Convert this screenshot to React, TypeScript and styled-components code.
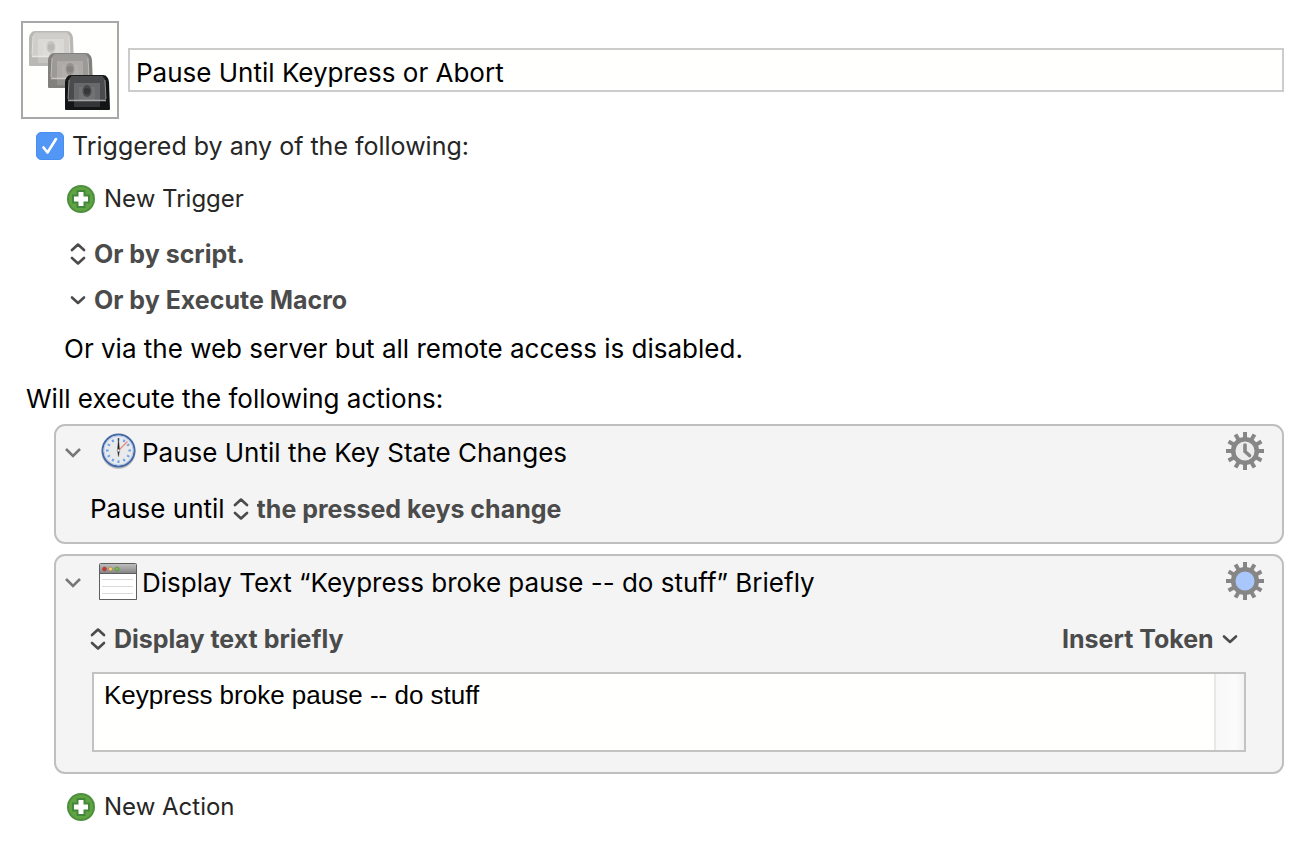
import React, { useState } from "react";
import styled, { createGlobalStyle } from "styled-components";

const GlobalStyle = createGlobalStyle`
  *, *::before, *::after { box-sizing: border-box; }
  body {
    margin: 0;
    background: #fff;
    font-family: Inter, "Liberation Sans", sans-serif;
    font-size: 26px;
    line-height: 32px;
    color: #000;
  }
  button, input, select, textarea { font: inherit; color: inherit; margin: 0; }
  svg { display: block; flex: none; }
`;

const Page = styled.main`
  padding: 21px 20px 16px 21px;
`;

const Header = styled.header`
  display: flex;
  align-items: center;
  gap: 9px;
  margin-bottom: 11px;
`;

const MacroIcon = styled.button`
  flex: none;
  width: 98px;
  height: 98px;
  padding: 0;
  border: 2px solid #a8a8a8;
  background: #fffffd;
`;

const NameField = styled.input`
  flex: 1;
  min-width: 0;
  height: 44px;
  padding: 4px 6px 0;
  border: 2px solid #cccccc;
  border-radius: 0;
  background: #fffffd;
  outline: none;
`;

const Row = styled.div<{ $indent?: number; $after?: number }>`
  display: flex;
  align-items: center;
  min-height: 32px;
  padding-left: ${(p) => p.$indent ?? 0}px;
  margin-bottom: ${(p) => p.$after ?? 0}px;
`;

const CheckLabel = styled.label`
  display: flex;
  align-items: center;
  gap: 8px;
  font-size: 25px;
  color: #262626;
`;

const CheckBox = styled.span`
  display: grid;
  width: 28px;
  height: 28px;
  & > * { grid-area: 1 / 1; }
  svg { pointer-events: none; }
`;

const CheckInput = styled.input`
  appearance: none;
  width: 28px;
  height: 28px;
  border-radius: 5px;
  border: 1px solid #b5b5b5;
  background: #fff;
  &:checked {
    border-color: #4a8df0;
    background: #5297f5;
  }
`;

const AddButton = styled.button`
  display: flex;
  align-items: center;
  gap: 9px;
  padding: 0;
  border: 0;
  background: none;
  font-size: 24px;
  color: #262626;
`;

const Popup = styled.label`
  display: flex;
  align-items: center;
  gap: 8px;
  color: #4b4b4b;
`;

const PopupSelect = styled.select`
  appearance: none;
  padding: 0;
  border: 0;
  height: 32px;
  background: none;
  font-size: 25px;
  font-weight: 700;
  outline: none;
`;

const ActionList = styled.div`
  display: flex;
  flex-direction: column;
  gap: 10px;
  margin: 0 0 17px 33px;
`;

const ActionCard = styled.section`
  padding: 6px 18px 17px 7px;
  border: 2px solid #bfbfbf;
  border-radius: 11px;
  background: #f4f4f4;
`;

const CardHeader = styled.div`
  display: flex;
  align-items: center;
  height: 38px;
  margin-bottom: 23px;
`;

const IconButton = styled.button`
  flex: none;
  padding: 0;
  border: 0;
  background: none;
`;

const ActionTitle = styled.h2`
  flex: 1;
  display: flex;
  align-items: center;
  gap: 4px;
  margin: 0 0 0 15px;
  font-size: inherit;
  font-weight: 400;
`;

const TitleText = styled.span`
  padding-top: 3px;
`;

const CardBody = styled.div`
  display: flex;
  align-items: center;
  gap: 8px;
  padding-left: 27px;
`;

const Spread = styled(CardBody)`
  justify-content: space-between;
  padding-right: 26px;
  margin-bottom: 17px;
`;

const TextFrame = styled.div`
  display: flex;
  height: 80px;
  margin: 0 18px 3px 29px;
  border: 2px solid #c3c3c3;
  background: #fffffd;
`;

const TextBody = styled.textarea`
  flex: 1;
  min-width: 0;
  padding: 5px 10px;
  border: 0;
  background: none;
  font-family: "Liberation Sans", Arial, sans-serif;
  font-size: 26px;
  resize: none;
  outline: none;
  overflow: hidden;
`;

const ScrollTrack = styled.div`
  width: 30px;
  border-left: 2px solid #e8e8e8;
  background: linear-gradient(to right, #f8f8f8, #fbfbfb 70%, #f3f3f3);
`;

function Camera({ x, y, body, rim, glass, panel, core, shine }: {
  x: number; y: number; body: string; rim: string; glass: string; panel: string; core: string; shine: string;
}) {
  return (
    <g transform={`translate(${x} ${y})`}>
      <path d="M0 7Q0 4 2 2Q3 0 6 0H38Q41 0 42 2Q44 4 44 7L45 34Q45 35 44 35H1Q0 35 0 34Z" fill={body} />
      <path d="M4 5Q4 2 7 2H37Q40 2 40 5L41 25H3Z" fill={glass} />
      <rect x="9" y="8" width="26" height="24" fill={panel} opacity=".25" />
      <rect x="9" y="8" width="26" height="17" fill={panel} opacity=".2" />
      <rect x="14" y="12" width="16" height="13" fill={panel} opacity=".2" />
      <ellipse cx="22" cy="16" rx="4.500" ry="6" fill={core} opacity=".45" />
      <path d="M19 14Q22 12 25 14V18Q22 21 19 18Z" fill={core} opacity=".45" />
      <path d="M4 5L3 24M40 5L41 24" stroke={shine} strokeWidth="1" opacity=".6" />
      <path d="M3 25.500H41" stroke={shine} strokeWidth="1.500" opacity=".75" />
      <path d="M6 1.500H38" stroke={rim} strokeWidth="1.200" />
    </g>
  );
}

const StackedCameras = () => (
  <svg width="94" height="94" viewBox="0 0 94 94" aria-hidden="true">
    <Camera x={6} y={8} body="#bab8b4" rim="#c6c4c1" glass="#cfcecb" panel="#eaeae8" core="#a9a8a5" shine="#f4f4f2" />
    <Camera x={25} y={30} body="#82807c" rim="#9b9996" glass="#9c9a97" panel="#c6c5c3" core="#73716e" shine="#deded9" />
    <Camera x={42} y={52} body="#131415" rim="#4c4d4f" glass="#4a4b4c" panel="#97989a" core="#1f2021" shine="#cfcfcf" />
  </svg>
);

const Tick = () => (
  <svg width="28" height="28" viewBox="0 0 28 28" aria-hidden="true">
    <path d="M7.500 15.500L11.500 20.500L20 7" fill="none" stroke="#fff" strokeWidth="2.600" strokeLinecap="round" strokeLinejoin="round" />
  </svg>
);

const PlusBadge = () => (
  <svg width="28" height="28" viewBox="0 0 28 28" aria-hidden="true">
    <circle cx="14" cy="14" r="14" fill="#4d8f3c" />
    <circle cx="14" cy="14" r="12" fill="#60a343" />
    <path d="M9.500 5H18.500V9.500H23V18.500H18.500V23H9.500V18.500H5V9.500H9.500Z" fill="#43883a" />
    <path d="M11.500 7H16.500V11.500H21V16.500H16.500V21H11.500V16.500H7V11.500H11.500Z" fill="#fff" />
  </svg>
);

const UpDown = () => (
  <svg width="16" height="24" viewBox="0 0 16 24" aria-hidden="true">
    <path d="M2 8L8 2.500L14 8M2 16L8 21.500L14 16" fill="none" stroke="#4b4b4b" strokeWidth="2.600" strokeLinecap="round" strokeLinejoin="round" />
  </svg>
);

const Down = () => (
  <svg width="16" height="24" viewBox="0 0 16 24" aria-hidden="true">
    <path d="M2 9.500L8 15L14 9.500" fill="none" stroke="#4b4b4b" strokeWidth="2.600" strokeLinecap="round" strokeLinejoin="round" />
  </svg>
);

const Disclosure = () => (
  <svg width="20" height="20" viewBox="0 0 20 20" aria-hidden="true">
    <path d="M3 8L10 15L17 8" fill="none" stroke="#777" strokeWidth="2.600" />
  </svg>
);

const steps = Array.from({ length: 12 }, (_, i) => i * 30);

const Clock = () => (
  <svg width="40" height="38" viewBox="0 0 40 38" aria-hidden="true">
    <ellipse cx="20.500" cy="20" rx="17" ry="17" fill="#c4c4c4" />
    <circle cx="20.500" cy="18.500" r="16" fill="#ededed" stroke="#4669a6" strokeWidth="2" />
    <circle cx="20.500" cy="18.500" r="14.600" fill="#e8eaeb" stroke="#a8c3ea" strokeWidth=".8" />
    {steps.map((a) => (
      <rect key={a} x="19.500" y="6" width="2" height="2.600" fill="#6f9fe6" transform={`rotate(${a} 20.500 18.500)`} />
    ))}
    <path d="M20.500 18.500L29.500 9.500" stroke="#e98a78" strokeWidth="1.200" />
    <path d="M20.500 6L21.500 18.500L20.500 24.500L19.500 18.500Z" fill="#222" stroke="#222" strokeWidth=".4" />
    <circle cx="20.500" cy="18.500" r="1.300" fill="#fff" stroke="#777" strokeWidth=".6" />
  </svg>
);

const WindowIcon = () => (
  <svg width="40" height="38" viewBox="0 0 40 38" aria-hidden="true">
    <defs>
      <linearGradient id="titlebar" x1="0" y1="0" x2="0" y2="1">
        <stop offset="0" stopColor="#bdbdbd" />
        <stop offset="1" stopColor="#868686" />
      </linearGradient>
    </defs>
    <rect x="1.500" y="1.500" width="37" height="37" rx="1" fill="#fff" stroke="#5e5e5e" />
    <rect x="2" y="2" width="36" height="9" fill="url(#titlebar)" />
    <path d="M2 11.500H38M1.500 37.500H38.500" stroke="#5e5e5e" />
    <circle cx="6.500" cy="7" r="2" fill="#d0342c" stroke="#98403a" strokeWidth=".6" />
    <circle cx="12.500" cy="7" r="2" fill="#f5cf7c" stroke="#a07c40" strokeWidth=".6" />
    <circle cx="19" cy="7" r="2" fill="#6fc043" stroke="#4f8a35" strokeWidth=".6" />
    <path d="M4 17.500H35M4 24.500H35M4 31.500H35" stroke="#dadada" />
  </svg>
);

function Gear({ fill, timed }: { fill: string; timed?: boolean }) {
  return (
    <svg width="38" height="38" viewBox="0 0 38 38" aria-hidden="true">
      {steps.map((a) => (
        <rect key={a} x="17" y="0" width="4" height="7" fill="#868686" transform={`rotate(${a} 19 19)`} />
      ))}
      <circle cx="19" cy="19" r="11.800" fill={fill} stroke="#868686" strokeWidth="4.500" />
      {timed && (
        <path d="M19 13V19.500L23.500 23.500" fill="none" stroke="#868686" strokeWidth="3.600" strokeLinecap="round" strokeLinejoin="round" />
      )}
    </svg>
  );
}

function SelectPopup({ label, options, icon, trailing }: {
  label: string; options: string[]; icon: React.ReactNode; trailing?: boolean;
}) {
  return (
    <Popup>
      {!trailing && icon}
      <PopupSelect aria-label={label}>
        {options.map((o) => <option key={o}>{o}</option>)}
      </PopupSelect>
      {trailing && icon}
    </Popup>
  );
}

export default function App() {
  const [name, setName] = useState("Pause Until Keypress or Abort");
  const [enabled, setEnabled] = useState(true);
  const [text, setText] = useState("Keypress broke pause -- do stuff");

  return (
    <>
      <GlobalStyle />
      <Page>
        <Header>
          <MacroIcon aria-label="Macro icon"><StackedCameras /></MacroIcon>
          <NameField aria-label="Macro name" value={name} onChange={(e) => setName(e.target.value)} />
        </Header>

        <Row $indent={15} $after={21}>
          <CheckLabel>
            <CheckBox>
              <CheckInput type="checkbox" checked={enabled} onChange={(e) => setEnabled(e.target.checked)} />
              {enabled && <Tick />}
            </CheckBox>
            Triggered by any of the following:
          </CheckLabel>
        </Row>
        <Row $indent={46} $after={23}>
          <AddButton><PlusBadge />New Trigger</AddButton>
        </Row>
        <Row $indent={49} $after={14}>
          <SelectPopup label="Script trigger" options={["Or by script."]} icon={<UpDown />} />
        </Row>
        <Row $indent={49} $after={17}>
          <SelectPopup label="Execute Macro trigger" options={["Or by Execute Macro"]} icon={<Down />} />
        </Row>
        <Row $indent={43} $after={18}>Or via the web server but all remote access is disabled.</Row>
        <Row $indent={5} $after={9}>Will execute the following actions:</Row>

        <ActionList>
          <ActionCard>
            <CardHeader>
              <IconButton aria-label="Collapse action"><Disclosure /></IconButton>
              <ActionTitle><Clock /><TitleText>Pause Until the Key State Changes</TitleText></ActionTitle>
              <IconButton aria-label="Action options"><Gear fill="#ececec" timed /></IconButton>
            </CardHeader>
            <CardBody>
              <span>Pause until</span>
              <SelectPopup label="Key state" options={["the pressed keys change"]} icon={<UpDown />} />
            </CardBody>
          </ActionCard>

          <ActionCard>
            <CardHeader>
              <IconButton aria-label="Collapse action"><Disclosure /></IconButton>
              <ActionTitle><WindowIcon /><TitleText>Display Text “Keypress broke pause -- do stuff” Briefly</TitleText></ActionTitle>
              <IconButton aria-label="Action options"><Gear fill="#a9c7fb" /></IconButton>
            </CardHeader>
            <Spread>
              <SelectPopup label="Display style" options={["Display text briefly"]} icon={<UpDown />} />
              <SelectPopup label="Insert token" options={["Insert Token"]} icon={<Down />} trailing />
            </Spread>
            <TextFrame>
              <TextBody aria-label="Text to display" value={text} onChange={(e) => setText(e.target.value)} />
              <ScrollTrack />
            </TextFrame>
          </ActionCard>
        </ActionList>

        <Row $indent={46}>
          <AddButton><PlusBadge />New Action</AddButton>
        </Row>
      </Page>
    </>
  );
}
